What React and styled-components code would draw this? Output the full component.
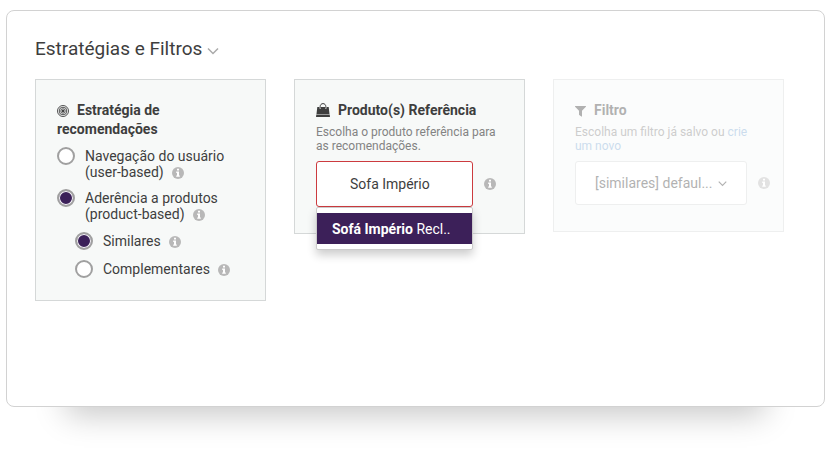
import { useState } from "react";
import styled, { createGlobalStyle } from "styled-components";

const TargetIcon = () => (
  <TitleIcon width="12" height="12" viewBox="0 0 24 24" aria-hidden="true">
    <g fill="none" stroke="currentColor" strokeWidth="1.8">
      <circle cx="12" cy="12" r="11" />
      <circle cx="12" cy="12" r="7.6" />
      <circle cx="12" cy="12" r="4.4" />
    </g>
    <circle cx="12" cy="12" r="2.4" fill="currentColor" />
  </TitleIcon>
);

const BagIcon = () => (
  <TitleIcon width="14" height="14" viewBox="0 0 14 14" aria-hidden="true">
    <path
      fill="none"
      stroke="currentColor"
      strokeWidth="1"
      d="M4.2 5V3.4C4.2 1.8 5.4.6 7 .6s2.800 1.200 2.800 2.800V5"
    />
    <path
      fill="currentColor"
      d="M1.300 4h2.100v1.400h1.600V4h4v1.400h1.600V4h2.100l.8 7H.5zM.3 11.500h13.400l.3 2.500H0z"
    />
  </TitleIcon>
);

const FunnelIcon = () => (
  <TitleIcon width="11" height="12" viewBox="0 0 11 12" aria-hidden="true">
    <path
      fill="currentColor"
      d="M.4 1h10.200c.4 0 .5.400.3.700L7 5.700v5.600c0 .4-.3.500-.6.300L4.200 10c-.2-.2-.2-.3-.2-.5V5.700L.1 1.700C-.1 1.400 0 1 .4 1z"
    />
  </TitleIcon>
);

const Chevron = ({ size = 12 }) => (
  <svg width={size} height={size} viewBox="0 0 12 12" aria-hidden="true">
    <path
      fill="none"
      stroke="currentColor"
      strokeWidth="1.5"
      d="M1 3.500l5 5 5-5"
    />
  </svg>
);

const Info = () => (
  <InfoIcon width="12" height="12" viewBox="0 0 12 12" aria-hidden="true">
    <circle cx="6" cy="6" r="6" fill="currentColor" />
    <path
      fill="#fff"
      d="M5 1.800h2v1.700H5zM4.200 4.500H7v3.900h.8v1.400H4.200V8.400H5V5.900h-.8z"
    />
  </InfoIcon>
);

const App = () => {
  const [strategy, setStrategy] = useState("product");
  const [mode, setMode] = useState("similares");
  const [query, setQuery] = useState("Sofa Império");

  return (
    <Page>
      <GlobalStyle />
      <Panel>
        <Heading>
          <HeadingButton type="button" aria-expanded="true">
            Estratégias e Filtros
            <Chevron />
          </HeadingButton>
        </Heading>
        <Cards>
          <Card>
            <Title>
              <TargetIcon />
              Estratégia de recomendações
            </Title>
            <Options>
              <Option>
                <Radio
                  name="strategy"
                  checked={strategy === "user"}
                  onChange={() => setStrategy("user")}
                />
                <span>
                  Navegação do usuário (user-based) <Info />
                </span>
              </Option>
              <Option>
                <Radio
                  name="strategy"
                  checked={strategy === "product"}
                  onChange={() => setStrategy("product")}
                />
                <span>
                  Aderência a produtos (product-based) <Info />
                </span>
              </Option>
              <Option $nested>
                <Radio
                  name="mode"
                  checked={mode === "similares"}
                  onChange={() => setMode("similares")}
                />
                <span>
                  Similares <Info />
                </span>
              </Option>
              <Option $nested>
                <Radio
                  name="mode"
                  checked={mode === "complementares"}
                  onChange={() => setMode("complementares")}
                />
                <span>
                  Complementares <Info />
                </span>
              </Option>
            </Options>
          </Card>

          <Card>
            <Title>
              <BagIcon />
              <label htmlFor="product">Produto(s) Referência</label>
            </Title>
            <Hint>Escolha o produto referência para as recomendações.</Hint>
            <Field>
              <Combo>
                <SearchInput
                  id="product"
                  type="text"
                  role="combobox"
                  aria-expanded="true"
                  aria-controls="suggestions"
                  value={query}
                  onChange={(e) => setQuery(e.target.value)}
                />
                <Menu id="suggestions" role="listbox">
                  <MenuItem role="option" aria-selected="true">
                    <strong>Sofá Império</strong> Recl..
                  </MenuItem>
                </Menu>
              </Combo>
              <Info />
            </Field>
          </Card>

          <Card $faded>
            <Title>
              <FunnelIcon />
              <label htmlFor="filter">Filtro</label>
            </Title>
            <Hint>
              Escolha um filtro já salvo ou <a href="#novo">crie um novo</a>
            </Hint>
            <Field>
              <SelectBox>
                <Select id="filter">
                  <option>[similares] defaul...</option>
                </Select>
                <Chevron size={9} />
              </SelectBox>
              <Info />
            </Field>
          </Card>
        </Cards>
      </Panel>
    </Page>
  );
};

const GlobalStyle = createGlobalStyle`
  * {
    box-sizing: border-box;
  }
  body {
    margin: 0;
    background: #fff;
    color: #3e3e3e;
    font-family: Roboto, "Liberation Sans", sans-serif;
    font-size: 14px;
    line-height: 16px;
  }
  input,
  select,
  button {
    font: inherit;
    color: inherit;
  }
`;

const Page = styled.div`
  min-height: 100vh;
  padding: 10px 6px 48px;
`;

const Panel = styled.main`
  padding: 26px 40px 105px 28px;
  background: #fff;
  border: 1px solid #d2d2d2;
  border-radius: 8px;
  box-shadow: 0 68px 30px -60px rgba(0, 0, 0, 0.22);
`;

const Heading = styled.h2`
  margin: 0 0 18px;
  font-size: 19px;
  font-weight: 400;
  line-height: 24px;
`;

const HeadingButton = styled.button`
  display: flex;
  align-items: center;
  gap: 5px;
  padding: 0;
  border: 0;
  background: none;
  svg {
    margin-top: 4px;
    color: #aaa;
  }
`;

const Cards = styled.div`
  display: grid;
  grid-template-columns: repeat(3, minmax(0, 1fr));
  align-items: start;
  gap: 28px;
`;

const Card = styled.section`
  padding: 21px 13px 22px 21px;
  background: #f7f9f8;
  border: 1px solid #d5d8d8;
  opacity: ${({ $faded }) => ($faded ? 0.4 : 1)};
`;

const Title = styled.h3`
  margin: 0;
  padding-right: 8px;
  font-size: 14px;
  font-weight: 700;
  line-height: 19px;
`;

const TitleIcon = styled.svg`
  margin-right: 8px;
  vertical-align: -2px;
`;

const InfoIcon = styled.svg`
  flex: none;
  margin-left: 5px;
  color: #b8b8b8;
  vertical-align: -2px;
`;

const Options = styled.div`
  display: flex;
  flex-direction: column;
  gap: 10px;
  margin-top: 9px;
`;

const Option = styled.label`
  display: flex;
  align-items: flex-start;
  gap: 10px;
  padding: ${({ $nested }) => ($nested ? "1px 0 1px 18px" : "0")};
`;

const Radio = styled.input.attrs({ type: "radio" })`
  flex: none;
  appearance: none;
  width: 18px;
  height: 18px;
  margin: -1px 0;
  border: 2px solid #a0a0a0;
  border-radius: 50%;
  background: #fff;
  &:checked {
    background: #3b2059 padding-box;
    box-shadow: inset 0 0 0 1px #fff;
  }
`;

const Hint = styled.p`
  margin: 5px 0 8px;
  padding-right: 8px;
  color: #838383;
  font-size: 12px;
  line-height: 14px;
  a {
    color: #7eaad4;
    text-decoration: none;
  }
`;

const Field = styled.div`
  display: flex;
  align-items: center;
  gap: 6px;
  margin-bottom: 4px;
`;

const Combo = styled.div`
  position: relative;
  flex: 0 1 157px;
`;

const SearchInput = styled.input`
  display: block;
  width: 100%;
  height: 46px;
  padding: 0 33px;
  background: #fff;
  border: 1px solid #cc3b3f;
  border-radius: 3px;
  outline: 0;
`;

const Menu = styled.ul`
  position: absolute;
  top: 100%;
  left: 0;
  z-index: 1;
  width: 100%;
  margin: 0;
  padding: 5px 0;
  list-style: none;
  background: #fff;
  border: 1px solid #ccc;
  border-radius: 2px;
  box-shadow: 0 5px 10px rgba(0, 0, 0, 0.2);
`;

const MenuItem = styled.li`
  padding: 8px 15px 7px;
  background: #3c2059;
  color: #fff;
  white-space: nowrap;
`;

const SelectBox = styled.div`
  display: flex;
  align-items: center;
  flex: 0 1 172px;
  position: relative;
  svg {
    position: absolute;
    right: 20px;
    pointer-events: none;
  }
`;

const Select = styled.select`
  appearance: none;
  width: 100%;
  height: 44px;
  padding: 0 32px 0 19px;
  background: #fff;
  border: 1px solid #d5d8d8;
  border-radius: 3px;
`;

export default App;
